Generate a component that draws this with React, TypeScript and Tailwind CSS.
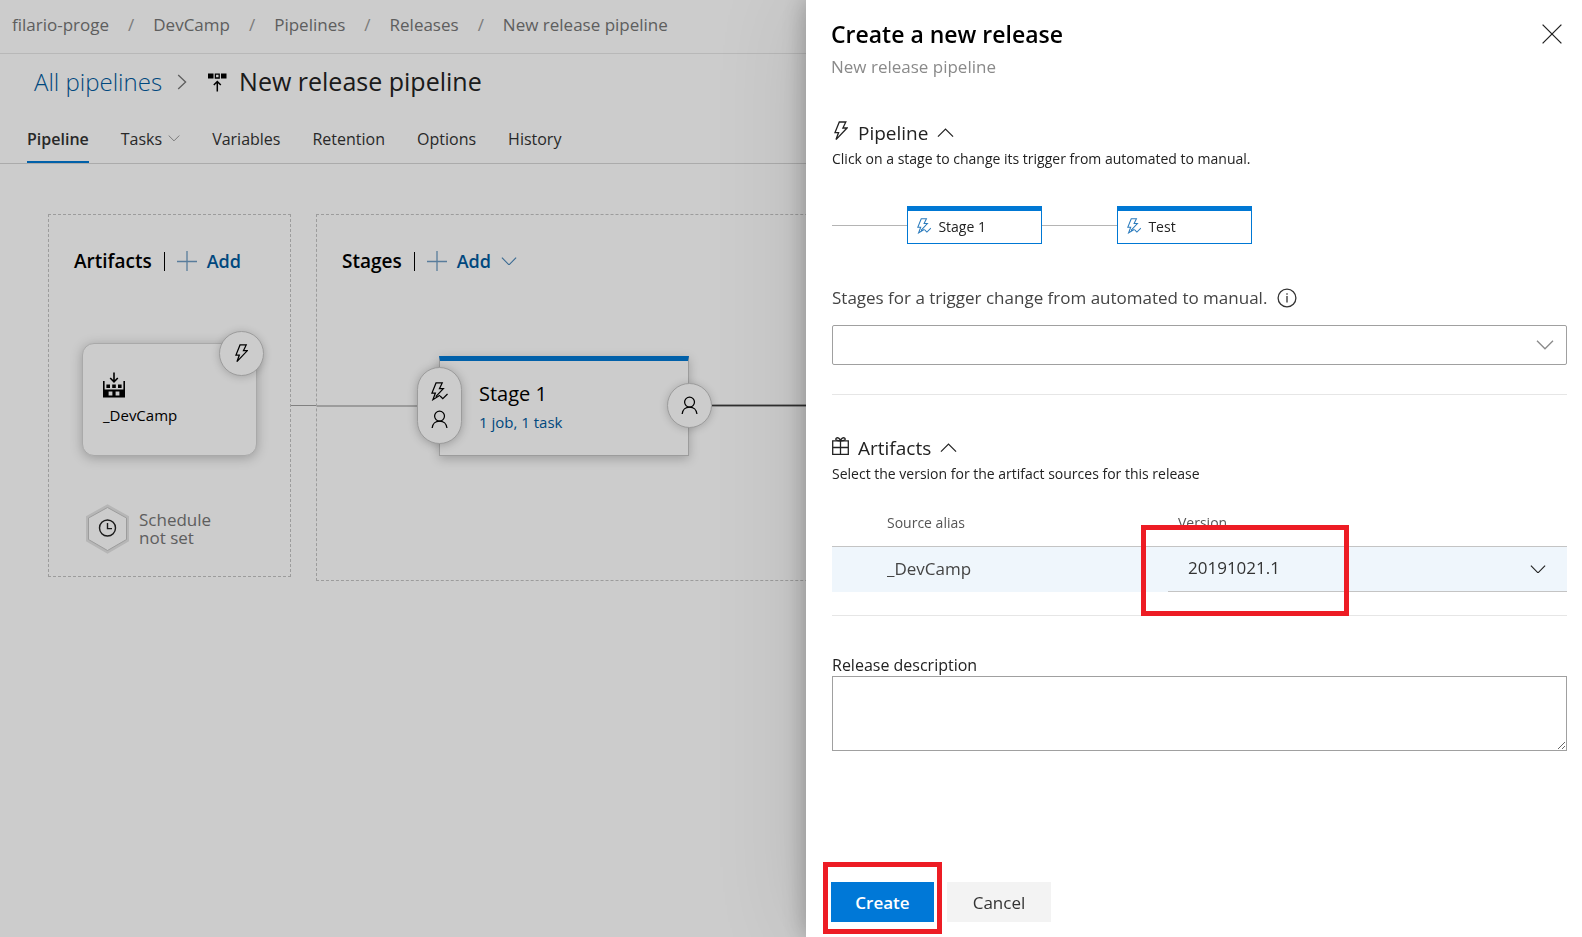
import React, { useState } from 'react';

type IconProps = { className?: string };

const stroke = {
  fill: 'none',
  stroke: 'currentColor',
  strokeWidth: 1.3,
} as const;

function ChevronDown({ className }: IconProps) {
  return (
    <svg viewBox="0 0 18 10" className={className} aria-hidden="true" {...stroke}>
      <path d="M1 0.8 L9 8.8 L17 0.8" />
    </svg>
  );
}

function ChevronUp({ className }: IconProps) {
  return (
    <svg viewBox="0 0 18 10" className={className} aria-hidden="true" {...stroke}>
      <path d="M1 9.2 L9 1.2 L17 9.2" />
    </svg>
  );
}

function ChevronRight({ className }: IconProps) {
  return (
    <svg viewBox="0 0 10 16" className={className} aria-hidden="true" {...stroke}>
      <path d="M1.2 1 L8.6 8 L1.2 15" />
    </svg>
  );
}

function Bolt({ className }: IconProps) {
  return (
    <svg viewBox="0 0 14 20" className={className} aria-hidden="true" {...stroke}>
      <path d="M5.3 1 H11.8 L8.9 7 H13 L2 18.6 L4.6 11.6 H1 Z" />
    </svg>
  );
}

function BoltCheck({ className }: IconProps) {
  return (
    <svg viewBox="0 0 18 20" className={className} aria-hidden="true" {...stroke}>
      <path d="M9.4 14 L2 18.6 L4.6 11.6 H1 L5.3 1 H11.8 L8.9 7 H13 L5 15.4" />
      <path d="M9.6 14.8 L12.4 17.6 L17.4 12.6" />
    </svg>
  );
}

function Person({ className }: IconProps) {
  return (
    <svg viewBox="0 0 18 20" className={className} aria-hidden="true" {...stroke}>
      <circle cx="9" cy="6.4" r="5.2" />
      <path d="M1.2 19 C1.6 14.4 4.8 11.6 9 11.6 C13.2 11.6 16.4 14.4 16.8 19" />
    </svg>
  );
}

function Plus({ className }: IconProps) {
  return (
    <svg viewBox="0 0 20 20" className={className} aria-hidden="true" {...stroke}>
      <path d="M10 0 V20 M0 10.5 H20" />
    </svg>
  );
}

function Close({ className }: IconProps) {
  return (
    <svg viewBox="0 0 20 20" className={className} aria-hidden="true" {...stroke}>
      <path d="M0.6 0.6 L19.4 19.4 M19.4 0.6 L0.6 19.4" />
    </svg>
  );
}

function Info({ className }: IconProps) {
  return (
    <svg viewBox="0 0 20 20" className={className} aria-hidden="true" {...stroke}>
      <circle cx="10" cy="10" r="8.9" />
      <path d="M10 8 V14.5 M10 5.2 V6.7" />
    </svg>
  );
}

function Gift({ className }: IconProps) {
  return (
    <svg viewBox="0 0 17 18" className={className} aria-hidden="true" {...stroke}>
      <path d="M0.7 3.8 H16.3 V17.3 H0.7 Z M0.7 10.5 H16.3 M8.5 3.8 V17.3" />
      <path d="M8.5 3.8 C4.4 3.9 3 2.6 4.2 1.3 C5.6 0 7.9 1.4 8.5 3.8 C9.1 1.4 11.4 0 12.8 1.3 C14 2.6 12.6 3.9 8.5 3.8 Z" />
    </svg>
  );
}

function ReleaseIcon({ className }: IconProps) {
  return (
    <svg viewBox="0 0 19 19" className={className} aria-hidden="true" {...stroke}>
      <path d="M0 0.5 H5.5 V5.5 H0 Z M13 0.5 H18.5 V5.5 H13 Z" fill="currentColor" stroke="none" />
      <path d="M7.4 1.2 H11.2 V5 H7.4 Z" />
      <path d="M9.3 18.5 V8.8 M5.8 12 L9.3 8.5 L12.8 12" strokeWidth="1.5" />
    </svg>
  );
}

function BuildIcon({ className }: IconProps) {
  return (
    <svg viewBox="0 0 22 26" className={className} aria-hidden="true">
      <path
        fill="currentColor"
        fillRule="evenodd"
        d="M0 9 H1.6 V17.6 H20.4 V9 H22 V25.4 H0 Z M5.6 19.6 V23.6 H9.4 V19.6 Z M12.6 19.6 V23.6 H16.4 V19.6 Z"
      />
      <path fill="currentColor" d="M3.4 12.6 H7 V16 H3.4 Z M9.2 12.6 H12.8 V16 H9.2 Z M15 12.6 H18.6 V16 H15 Z" />
      <path d="M11 0.4 V9.6 M7.2 6 L11 9.8 L14.8 6" fill="none" stroke="currentColor" strokeWidth="1.6" />
    </svg>
  );
}

function ScheduleHexagon({ className }: IconProps) {
  return (
    <svg viewBox="0 0 45 50" className={className} aria-hidden="true" fill="none">
      <path d="M22.5 2.5 L42 13.5 V36 L22.5 47.5 L3 36 V13.5 Z" stroke="#e4e4e4" strokeWidth="4" />
      <path d="M22.5 3.5 L41.5 14 V35.5 L22.5 46.5 L3.5 35.5 V14 Z" stroke="#c4c4c4" strokeWidth="1" fill="#fff" />
      <circle cx="22.5" cy="24" r="8" stroke="#222" strokeWidth="1.4" />
      <path d="M22.5 19 V24.6 H27" stroke="#222" strokeWidth="1.4" />
    </svg>
  );
}

const crumbs = ['filario-proge', 'DevCamp', 'Pipelines', 'Releases', 'New release pipeline'];
const tabs = ['Pipeline', 'Tasks', 'Variables', 'Retention', 'Options', 'History'];

function Breadcrumb() {
  return (
    <nav aria-label="Breadcrumb" className="flex h-[54px] items-center border-b border-[#e6e6e6] pb-1 pl-3">
      <ol className="flex items-center gap-[19px] text-[17px] leading-6 text-[#767676]">
        {crumbs.map((crumb, i) => (
          <React.Fragment key={crumb}>
            {i > 0 && (
              <li aria-hidden="true" className="text-[#9a9a9a]">
                /
              </li>
            )}
            <li>
              <a href="#">{crumb}</a>
            </li>
          </React.Fragment>
        ))}
      </ol>
    </nav>
  );
}

function Tabs({ active, onSelect }: { active: string; onSelect: (tab: string) => void }) {
  return (
    <div role="tablist" className="flex h-[50px] gap-8 border-b border-[#d6d6d6] pl-[27px]">
      {tabs.map((tab) => (
        <button
          key={tab}
          type="button"
          role="tab"
          aria-selected={tab === active}
          onClick={() => onSelect(tab)}
          className={
            tab === active
              ? 'flex items-center gap-1.5 border-y-2 border-t-transparent border-b-[#0078d4] text-[16px] font-semibold text-[#333]'
              : 'flex items-center gap-1.5 border-y-2 border-transparent text-[16px] text-[#333]'
          }
        >
          {tab}
          {tab === 'Tasks' && <ChevronDown className="w-3 text-[#8a8a8a]" />}
        </button>
      ))}
    </div>
  );
}

function LaneHeader({ title, menu }: { title: string; menu?: boolean }) {
  return (
    <div className="flex h-7 items-center">
      <h2 className="text-[19px] font-semibold text-black">{title}</h2>
      <span className="ml-3 h-[19px] w-px bg-black" />
      <button type="button" className="ml-3 flex items-center gap-2.5 text-[18px] font-semibold text-[#005a9e]">
        <Plus className="size-5 text-[#6f9cc2]" />
        Add
        {menu && <ChevronDown className="w-4 text-[#4b86b8]" />}
      </button>
    </div>
  );
}

function ArtifactsLane() {
  return (
    <section className="flex h-[363px] w-[243px] shrink-0 flex-col border border-dashed border-[#c4c4c4] px-[25px] pt-8">
      <LaneHeader title="Artifacts" />
      <div className="relative mt-[68px] ml-2 flex h-[113px] w-[175px] flex-col rounded-xl border border-[#d4d4d4] bg-white pt-7 pl-5 shadow-[0_2px_12px_rgba(0,0,0,0.25)]">
        <BuildIcon className="h-[26px] w-[22px] text-black" />
        <p className="mt-[5px] text-[15px] leading-6 text-black">_DevCamp</p>
        <button
          type="button"
          aria-label="Continuous deployment trigger"
          className="absolute -top-[13px] -right-[8px] flex size-[45px] items-center justify-center rounded-full border border-[#c4c4c4] bg-white text-black shadow-[0_1px_8px_rgba(0,0,0,0.2)]"
        >
          <Bolt className="h-[19px]" />
        </button>
      </div>
      <div className="mt-12 ml-[11px] flex items-center gap-[9px]">
        <ScheduleHexagon className="h-[50px] w-[45px]" />
        <p className="text-[17px] leading-[18px] text-[#767676]">
          Schedule
          <br />
          not set
        </p>
      </div>
    </section>
  );
}

function StagesLane() {
  return (
    <section className="relative h-[367px] flex-1 border border-r-0 border-dashed border-[#c4c4c4] pt-8 pl-[25px]">
      <span className="absolute top-[190px] -left-[26px] h-px w-[25px] bg-[#a0a0a0]" />
      <span className="absolute top-[190px] left-0 h-0.5 w-[101px] bg-[#c3c3c3]" />
      <LaneHeader title="Stages" menu />
      <div className="relative mt-[81px] ml-[97px] h-[100px] w-[250px] border border-t-[5px] border-[#c4c4c4] border-t-[#0078d4] bg-white pt-[18px] pl-[39px] shadow-[0_3px_10px_rgba(0,0,0,0.22)]">
        <h3 className="text-[20px] leading-[30px] text-black">Stage 1</h3>
        <a href="#" className="block text-[15px] leading-[26px] text-[#005a9e]">
          1 job, 1 task
        </a>
        <div className="absolute top-[6px] -left-[23px] flex h-[77px] w-[45px] flex-col items-center justify-center gap-[9px] rounded-full border border-[#c4c4c4] bg-white text-black shadow-[0_1px_10px_rgba(0,0,0,0.25)]">
          <BoltCheck className="h-[19px]" />
          <Person className="h-[19px]" />
        </div>
        <div className="absolute top-[22px] -right-[24px] flex size-[45px] items-center justify-center rounded-full border border-[#c4c4c4] bg-white text-black shadow-[0_1px_8px_rgba(0,0,0,0.2)]">
          <Person className="h-[19px]" />
        </div>
        <span className="absolute top-[43px] left-[272px] h-[3px] w-[134px] border-y border-[#b0b0b0] bg-[#3c3c3c]" />
      </div>
    </section>
  );
}

function SectionHeader({ icon, title, hint }: { icon: React.ReactNode; title: string; hint: string }) {
  return (
    <>
      <button type="button" className="flex h-[30px] items-center text-[19px] text-[#222]">
        <span className="flex w-[26px] pb-1">{icon}</span>
        {title}
        <ChevronUp className="ml-[9px] w-[17px]" />
      </button>
      <p className="text-[14px] leading-[21px] text-[#222]">{hint}</p>
    </>
  );
}

function StageChip({ name }: { name: string }) {
  return (
    <>
      <span className="h-px w-[75px] bg-[#b4b4b4]" />
      <button
        type="button"
        className="flex h-[38px] w-[135px] items-center gap-[7px] border border-t-[5px] border-[#0078d4] bg-white pb-0.5 pl-[9px] text-[14px] text-[#222]"
      >
        <BoltCheck className="h-4 text-[#2b7bbd]" />
        {name}
      </button>
    </>
  );
}

function ReleasePanel() {
  return (
    <aside
      role="dialog"
      aria-label="Create a new release"
      className="fixed inset-y-0 right-0 flex w-[776px] max-w-full flex-col bg-white px-[15px] shadow-[0_0_24px_rgba(0,0,0,0.28),0_0_90px_rgba(0,0,0,0.12)]"
    >
      <header className="flex items-start justify-between pt-[18px] pl-2.5">
        <div>
          <h1 className="text-[23px] leading-8 font-semibold text-black">Create a new release</h1>
          <p className="mt-[5px] text-[17px] leading-6 text-[#8a8a8a]">New release pipeline</p>
        </div>
        <button type="button" aria-label="Close" className="mt-1.5 mr-[5px] text-[#222]">
          <Close className="size-5" />
        </button>
      </header>

      <section className="mt-[39px] ml-[11px]">
        <SectionHeader
          icon={<Bolt className="h-5 pl-0.5" />}
          title="Pipeline"
          hint="Click on a stage to change its trigger from automated to manual."
        />
        <div className="mt-[37px] flex items-center">
          <StageChip name="Stage 1" />
          <StageChip name="Test" />
        </div>
        <div className="mt-[42px] flex items-center gap-2.5">
          <label htmlFor="stages" className="text-[17px] leading-6 text-[#444]">
            Stages for a trigger change from automated to manual.
          </label>
          <Info className="size-5 text-[#333]" />
        </div>
        <div className="relative mt-[15px]">
          <select
            id="stages"
            className="h-10 w-full appearance-none rounded-xs border border-[#a0a0a0] bg-white px-3 text-[17px]"
          >
            <option value=""></option>
          </select>
          <ChevronDown className="pointer-events-none absolute top-[15px] right-[13px] w-[18px] text-[#8a8a8a]" />
        </div>
      </section>

      <section className="mt-[29px] ml-[11px] border-t border-[#e6e6e6] pt-[38px]">
        <SectionHeader
          icon={<Gift className="h-[18px] w-[17px]" />}
          title="Artifacts"
          hint="Select the version for the artifact sources for this release"
        />
        <table className="mt-7 w-full table-fixed border-collapse">
          <thead>
            <tr className="h-[34px] border-b border-[#c4c4c4] text-left align-top text-[14px] leading-[22px] text-[#555]">
              <th className="w-[336px] pl-[55px] font-normal">Source alias</th>
              <th className="pl-2.5 font-normal">Version</th>
            </tr>
          </thead>
          <tbody>
            <tr className="bg-[#eff6fc]">
              <td className="pl-[55px] text-[17px] text-[#444]">_DevCamp</td>
              <td className="relative p-0">
                <select
                  aria-label="Version"
                  className="block h-[45px] w-full appearance-none border-b border-[#c4c4c4] bg-transparent pb-0.5 pl-5 text-[17px] text-[#333]"
                >
                  <option>20191021.1</option>
                </select>
                <ChevronDown className="pointer-events-none absolute top-[18px] right-[21px] w-4 text-[#222]" />
                <span className="pointer-events-none absolute -top-[22px] -left-[27px] h-[91px] w-[208px] border-[5px] border-[#ed1c24]" />
              </td>
            </tr>
          </tbody>
        </table>
      </section>

      <section className="mt-[23px] ml-[11px] border-t border-[#e6e6e6] pt-[38px]">
        <label htmlFor="description" className="block text-[16px] leading-[22px] text-[#222]">
          Release description
        </label>
        <textarea id="description" className="block h-[75px] w-full resize-y border border-[#a0a0a0] p-2 text-[17px]" />
      </section>

      <footer className="mt-auto mb-[15px] ml-2.5 flex gap-[13px]">
        <div className="relative">
          <button type="button" className="h-10 w-[103px] bg-[#0078d7] pt-0.5 text-[17px] font-semibold text-white">
            Create
          </button>
          <span className="pointer-events-none absolute -top-5 -right-2 -left-2 h-[72px] border-[5px] border-[#ed1c24]" />
        </div>
        <button type="button" className="h-10 w-[104px] bg-[#f3f3f3] pt-0.5 text-[17px] font-medium text-[#333]">
          Cancel
        </button>
      </footer>
    </aside>
  );
}

export default function App() {
  const [tab, setTab] = useState('Pipeline');
  return (
    <div className="relative min-h-screen overflow-hidden bg-white font-['Segoe_UI','Open_Sans',sans-serif]">
      <Breadcrumb />
      <div className="flex h-[60px] items-center pb-1 pl-[34px] text-[24px]">
        <a href="#" className="font-light text-[#005a9e]">
          All pipelines
        </a>
        <ChevronRight className="ml-[15px] h-4 text-[#767676]" />
        <ReleaseIcon className="ml-[21px] size-[19px] text-black" />
        <h1 className="ml-3 text-[25px] text-[#222]">New release pipeline</h1>
      </div>
      <Tabs active={tab} onSelect={setTab} />
      <main className="flex gap-[25px] pt-[50px] pl-12">
        <ArtifactsLane />
        <StagesLane />
      </main>
      <div className="absolute inset-0 bg-black/20" />
      <ReleasePanel />
    </div>
  );
}
